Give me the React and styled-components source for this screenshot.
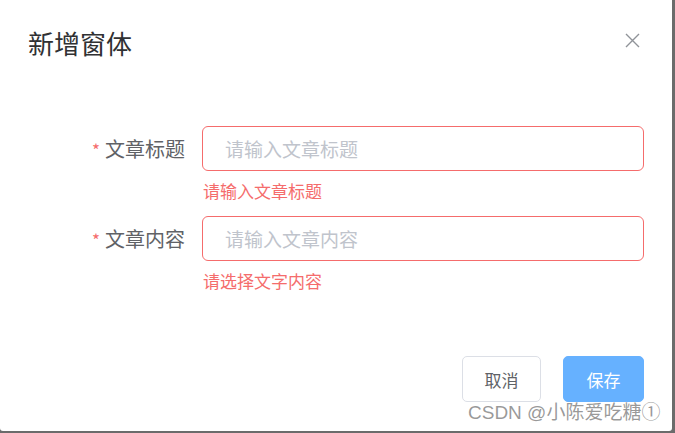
import React from "react";
import styled, { createGlobalStyle } from "styled-components";

const Global = createGlobalStyle`
  html, body { margin: 0; padding: 0; }
  body {
    background: #6b6b6b;
    width: 675px;
    height: 433px;
    overflow: hidden;
    font-family: "Noto Sans CJK SC", "Microsoft YaHei", sans-serif;
  }
`;

const Dialog = styled.div`
  position: relative;
  width: 672px;
  height: 431px;
  background: #fff;
  border-radius: 0 0 3px 3px;
  box-sizing: border-box;
  padding: 0 28px 0 28px;
  display: flex;
  flex-direction: column;
`;

const Header = styled.div`
  display: flex;
  align-items: center;
  justify-content: space-between;
  height: 34px;
  margin-top: 26px;
`;

const Title = styled.h2`
  margin: 0;
  font-size: 26px;
  font-weight: 400;
  line-height: 34px;
  color: #303133;
`;

const Close = styled.button`
  border: 0;
  background: none;
  padding: 0;
  margin-right: 4px;
  margin-bottom: 6px;
  width: 16px;
  height: 16px;
  display: flex;
  align-items: center;
  justify-content: center;
  cursor: pointer;
`;

const Form = styled.div`
  margin-top: 66px;
  display: flex;
  flex-direction: column;
`;

const Item = styled.div`
  display: flex;
`;

const Label = styled.label`
  width: 174px;
  box-sizing: border-box;
  padding-right: 17px;
  text-align: right;
  line-height: 45px;
  height: 45px;
  font-size: 20px;
  color: #606266;
  white-space: nowrap;
`;

const Star = styled.span`
  color: #f56c6c;
  font-size: 17px;
  margin-right: 5px;
`;

const Field = styled.div`
  flex: 1;
  display: flex;
  flex-direction: column;
`;

const Input = styled.input`
  height: 45px;
  box-sizing: border-box;
  border: 1px solid #f56c6c;
  border-radius: 6px;
  padding: 0 22px;
  font-size: 19px;
  font-family: inherit;
  color: #606266;
  outline: none;
  &::placeholder { color: #c0c4cc; }
`;

const Error = styled.div`
  height: 45px;
  box-sizing: border-box;
  padding-top: 8px;
  padding-left: 1px;
  font-size: 17px;
  line-height: 24px;
  color: #f56c6c;
`;

const Footer = styled.div`
  margin-top: 50px;
  display: flex;
  justify-content: flex-end;
  gap: 22px;
`;

const Button = styled.button`
  width: ${p => (p.$primary ? "81px" : "79px")};
  height: 46px;
  box-sizing: border-box;
  border-radius: 5px;
  font-size: 17px;
  font-family: inherit;
  cursor: pointer;
  border: 1px solid ${p => (p.$primary ? "#66b1ff" : "#dcdfe6")};
  background: ${p => (p.$primary ? "#66b1ff" : "#fff")};
  color: ${p => (p.$primary ? "#fff" : "#606266")};
  padding: 0;
`;

const Watermark = styled.div`
  position: absolute;
  left: 468px;
  top: 401px;
  font-family: "Liberation Sans", "Noto Sans CJK SC", sans-serif;
  font-size: 19px;
  line-height: 24px;
  color: rgba(120, 120, 120, 0.75);
  text-shadow: 0 0 1px rgba(255,255,255,0.8);
  white-space: nowrap;
  pointer-events: none;
`;

export default function App() {
  return (
    <>
      <Global />
      <Dialog>
        <Header>
          <Title>新增窗体</Title>
          <Close aria-label="关闭">
            <svg width="15" height="15" viewBox="0 0 15 15">
              <path d="M1 1 L14 14 M14 1 L1 14" stroke="#909399" strokeWidth="1.4" fill="none" />
            </svg>
          </Close>
        </Header>
        <Form>
          <Item>
            <Label><Star>*</Star>文章标题</Label>
            <Field>
              <Input placeholder="请输入文章标题" />
              <Error>请输入文章标题</Error>
            </Field>
          </Item>
          <Item>
            <Label><Star>*</Star>文章内容</Label>
            <Field>
              <Input placeholder="请输入文章内容" />
              <Error>请选择文字内容</Error>
            </Field>
          </Item>
        </Form>
        <Footer>
          <Button>取消</Button>
          <Button $primary>保存</Button>
        </Footer>
        <Watermark>CSDN @小陈爱吃糖①</Watermark>
      </Dialog>
    </>
  );
}
